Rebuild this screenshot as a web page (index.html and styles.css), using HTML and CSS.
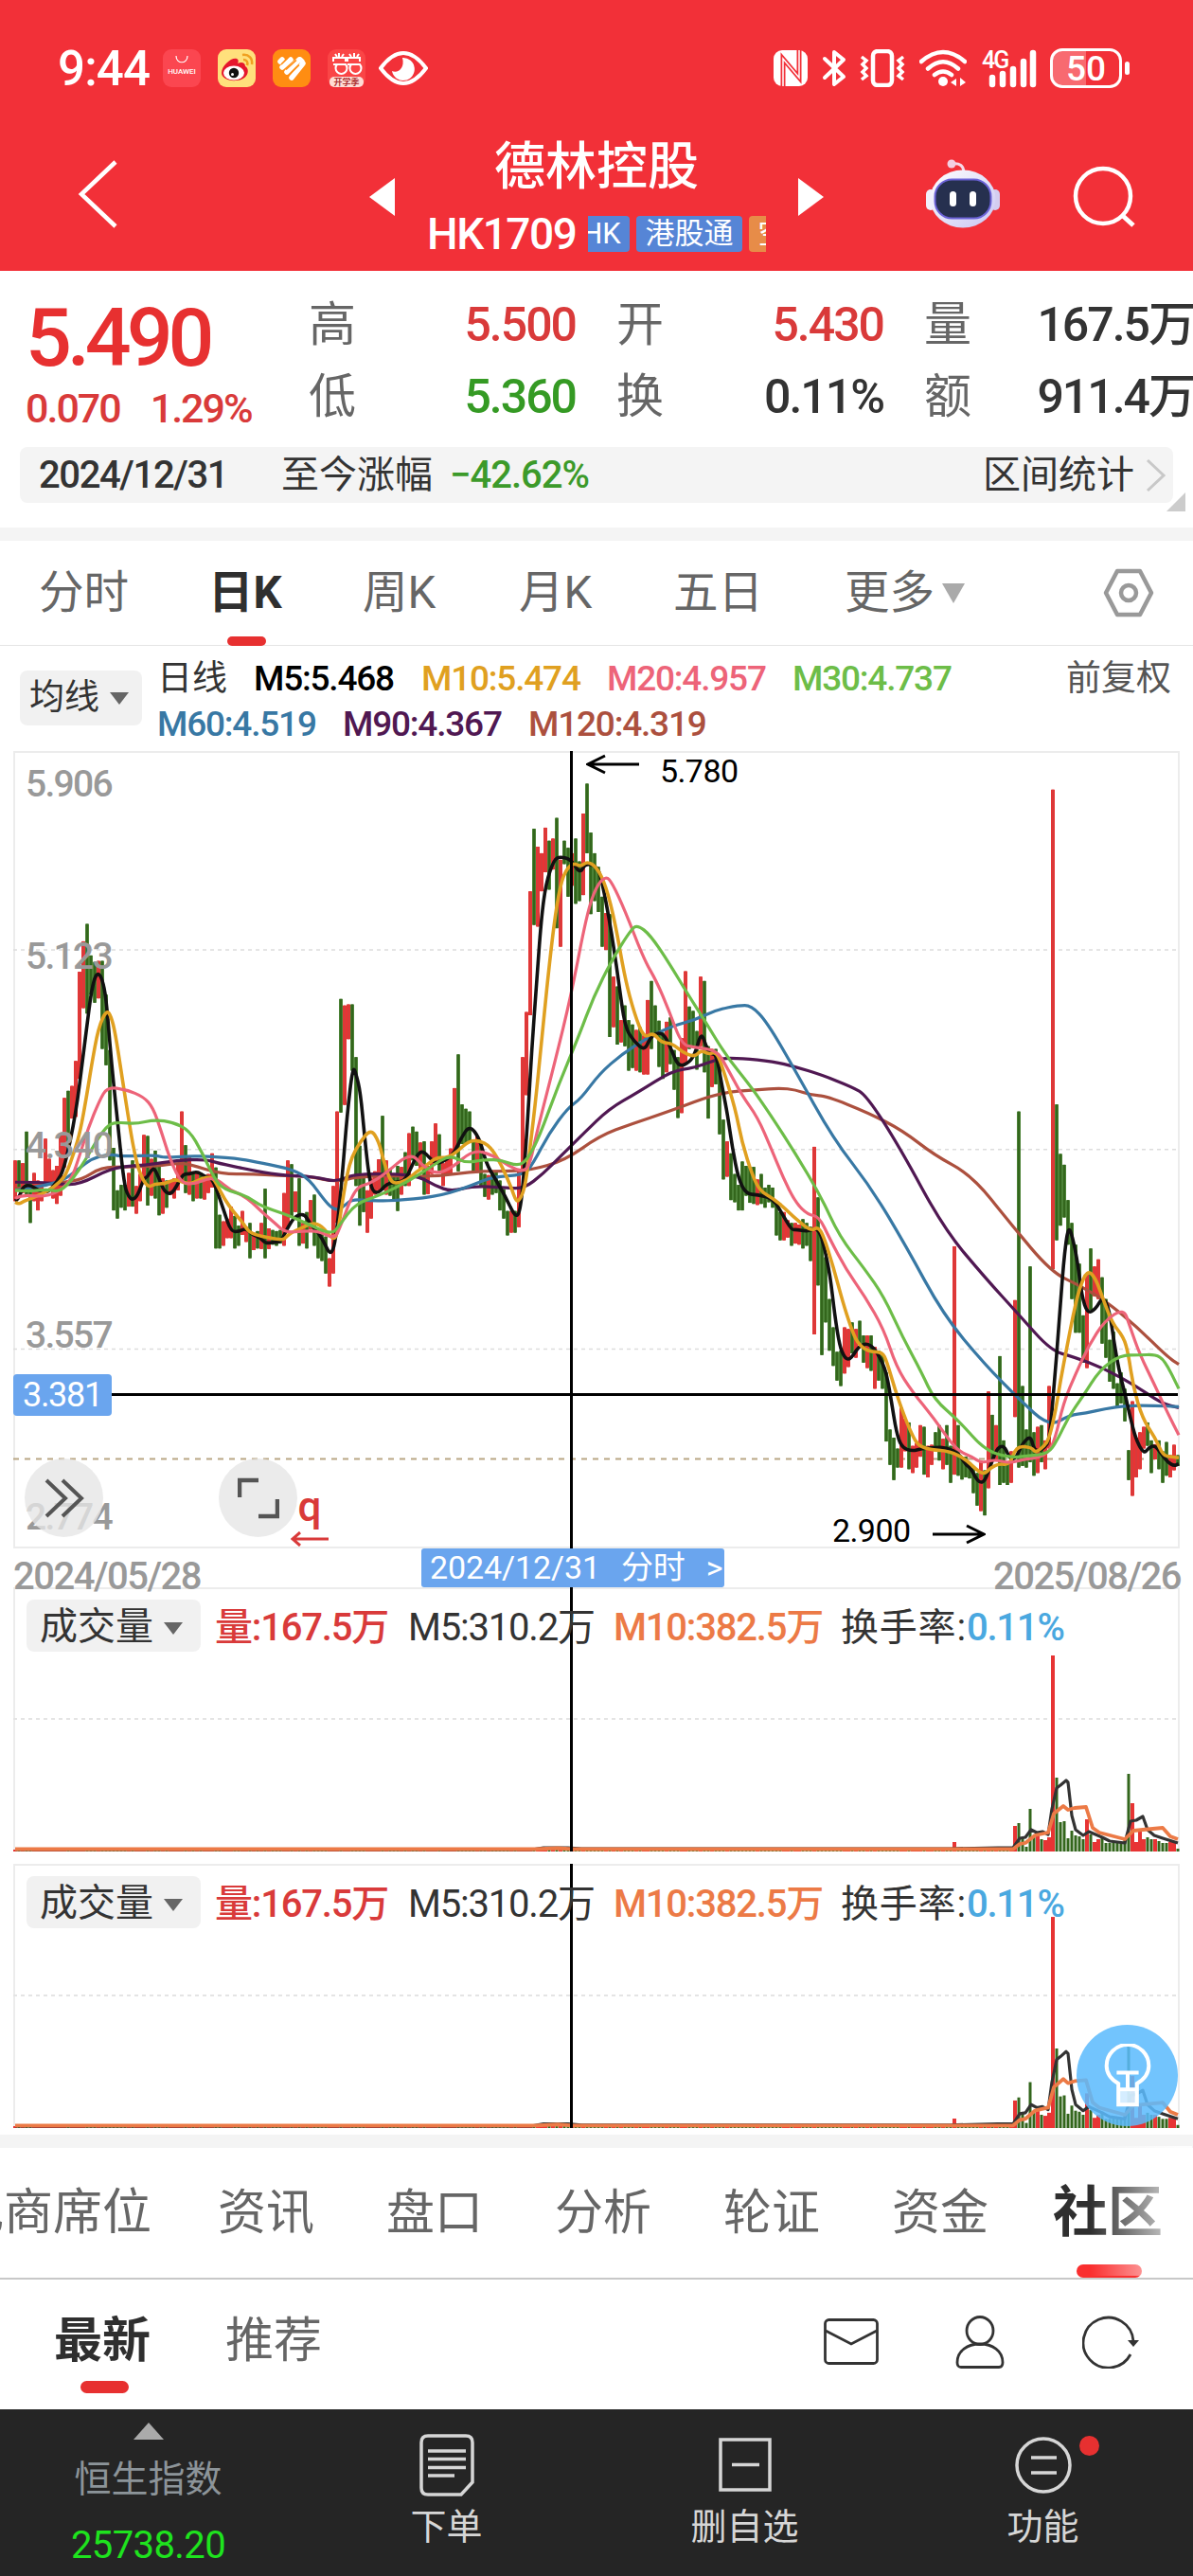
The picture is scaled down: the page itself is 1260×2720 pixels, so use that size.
FILE: index.html
```html
<!DOCTYPE html>
<html lang="zh-CN">
<head>
    <meta charset="UTF-8">
    <meta name="viewport" content="width=device-width, initial-scale=1.0">
    <title>德林控股 HK1709</title>
    <link rel="stylesheet" href="styles.css">
</head>
<body>
    <!-- Red Header -->
    <div class="header">
        <div class="status-bar">
            <span class="clock">9:44</span>
            <svg class="app-icon" viewBox="0 0 40 40"><rect width="40" height="40" rx="9" fill="#fb4650"/><path d="M14 7c0 9 12 9 12 0" fill="none" stroke="#fff" stroke-width="1.2"/><text x="20" y="25.500" text-anchor="middle" class="huawei">HUAWEI</text></svg>
            <svg class="app-icon" viewBox="0 0 40 40"><rect width="40" height="40" rx="9" fill="#ffe07c"/><path d="M4 25C4 17 15 8 20 10c3 1 1 5 1 5 4-2 8-1 8 3 5 2 4 14-9 15-9 1-16-3-16-8z" fill="#e6162d"/><ellipse cx="17" cy="25" rx="11" ry="7.500" fill="#fff"/><circle cx="17" cy="25" r="5.200" fill="#111"/><circle cx="15.500" cy="26.500" r="1.500" fill="#fff"/><path d="M26 6c7-1 11 4 10 10M27 11c4 0 5 3 4 6" fill="none" stroke="#f0a020" stroke-width="2.500"/></svg>
            <svg class="app-icon" viewBox="0 0 40 40"><rect width="40" height="40" rx="9" fill="#ff8d12"/><g stroke="#fff" stroke-width="5.500" stroke-linecap="round"><path d="M8 13l2-2M10 19l9-8M15 24l13-13M20 30l12-15M29 11l2 2"/></g><path d="M9 16l7-7M14 21.500l11-10M18 26.500l10-10" stroke="#ff8d12" stroke-width="1.600"/></svg>
            <svg class="app-icon" viewBox="0 0 40 40"><rect width="40" height="40" rx="9" fill="#fa4546"/><g fill="none" stroke="#fff" stroke-width="2"><path d="M6 13V9h13v4M21 13V9h13v4M6 16h13a6 6 0 1 1-9 0M21 16h13a6 6 0 1 1-9 0M8 5l2 3M12 4v4M17 5l-2 3M23 5l2 3M28 4v4M33 5l-2 3"/></g><rect x="2" y="29" width="36" height="11" rx="5" fill="#ffdcd5"/><text x="20" y="38" text-anchor="middle" class="back-school">开学季</text></svg>
            <svg class="eye-icon" viewBox="0 0 52 38"><path d="M2 19Q26-13 50 19Q26 51 2 19z" fill="none" stroke="#fff" stroke-width="4"/><path d="M25 8a12 12 0 1 1-11 14c6 3 14-3 11-14z" fill="#fff"/></svg>
            <div class="status-right">
                <svg width="36" height="38" viewBox="0 0 36 38"><rect width="36" height="38" rx="9" fill="#fff"/><path d="M10 38V9l17 20V0" fill="none" stroke="#f23038" stroke-width="5"/><path d="M10 38V9l17 20V0" fill="none" stroke="#fff" stroke-width="1.500"/></svg>
                <svg class="bluetooth" width="26" height="40" viewBox="0 0 26 40"><path d="M3 10l20 19-10 8V3l10 8L3 30" fill="none" stroke="#fff" stroke-width="4" stroke-linejoin="round" stroke-linecap="round"/></svg>
                <svg class="vibrate" width="48" height="40" viewBox="0 0 48 40"><rect x="14" y="2" width="20" height="36" rx="5" fill="none" stroke="#fff" stroke-width="4.500"/><path d="M2 8l5 4-4 4 4 4-4 4 4 4-5 4M46 8l-5 4 4 4-4 4 4 4-4 4 5 4" fill="none" stroke="#fff" stroke-width="3.500"/></svg>
                <svg class="wifi" width="50" height="40" viewBox="0 0 50 40"><g fill="none" stroke="#fff" stroke-width="4.500" stroke-linecap="round"><path d="M2 13Q25-7 48 13M9 20.500Q25 6 41 20.500M16 27q9-7 18 0"/></g><circle cx="25" cy="34" r="5" fill="#fff"/><path d="M39 31v8l-6-4zM43 30v9l6-4z" fill="#fff"/></svg>
                <svg class="signal" width="58" height="40" viewBox="0 0 58 40"><text x="0" y="20" class="net">4G</text><path d="M11 37v-7M22 37V26M33 37V21M44 37V13M54 37V4" stroke="#fff" stroke-width="6.500" stroke-linecap="round"/></svg>
                <div class="battery">50</div><span class="battery-tip"></span>
            </div>
        </div>
        <div class="title-bar">
            <svg class="back" width="42" height="72" viewBox="0 0 42 72"><path d="M40 2L4 36l36 34" fill="none" stroke="#fff" stroke-width="4.500"/></svg>
            <svg class="prev" width="27" height="40" viewBox="0 0 27 40"><path d="M27 0v40L0 20z" fill="#fff"/></svg>
            <div class="stock">
                <div class="stock-name">德林控股</div>
                <div class="stock-code">
                    <span class="code">HK1709</span>
                    <div class="tags"><span class="tag tag-hk">HK</span><span class="tag">港股通</span><span class="tag tag-short">空</span></div>
                </div>
            </div>
            <svg class="next" width="27" height="40" viewBox="0 0 27 40"><path d="M0 0v40l27-20z" fill="#fff"/></svg>
            <svg class="robot" width="80" height="74" viewBox="0 0 80 74">
                <defs>
                    <linearGradient id="shell" x2="1" y2="1"><stop offset="0" stop-color="#fff"/><stop offset="1" stop-color="#c9c6f3"/></linearGradient>
                </defs>
                <path d="M28 5q13-2 13 10" fill="none" stroke="#f6d8e8" stroke-width="3"/><circle cx="28" cy="5" r="4.500" fill="#f3cfe2"/>
                <rect x="1" y="32" width="10" height="22" rx="5" fill="#f1effb"/><rect x="69" y="32" width="10" height="22" rx="5" fill="#d3cdf0"/>
                <ellipse cx="40" cy="42" rx="34.500" ry="30.500" fill="url(#shell)"/>
                <rect x="10.500" y="21.500" width="59" height="41" rx="18" fill="#26304f" stroke="#6c63d8" stroke-width="2"/>
                <rect x="26" y="34" width="7" height="16" rx="3.500" fill="#fff"/><rect x="47" y="34" width="7" height="16" rx="3.500" fill="#fff"/>
            </svg>
            <svg class="search" width="68" height="68" viewBox="0 0 68 68"><circle cx="32" cy="32" r="29" fill="none" stroke="#fff" stroke-width="4.500"/><path d="M53 53l11 10" stroke="#fff" stroke-width="5"/></svg>
        </div>
    </div>

    <!-- Quote Section -->
    <div class="quote">
        <div class="price-block">
            <div class="price">5.490</div>
            <div class="change"><span>0.070</span><span>1.29%</span></div>
        </div>
        <div class="quote-grid">
            <div class="cell"><span>高</span><b class="up">5.500</b></div>
            <div class="cell"><span>开</span><b class="up">5.430</b></div>
            <div class="cell"><span>量</span><b>167.5万</b></div>
            <div class="cell"><span>低</span><b class="down">5.360</b></div>
            <div class="cell"><span>换</span><b>0.11%</b></div>
            <div class="cell"><span>额</span><b>911.4万</b></div>
        </div>
    </div>
    <div class="range-bar">
        <span class="range-date">2024/12/31</span>
        <span class="range-label">至今涨幅</span>
        <span class="range-value">−42.62%</span>
        <span class="range-link">区间统计</span>
        <svg width="22" height="36" viewBox="0 0 22 36"><path d="M2 2l17 16L2 34" fill="none" stroke="#c8c8c8" stroke-width="3"/></svg>
        <i class="corner"></i>
    </div>
    <div class="divider"></div>

    <!-- Period Tabs -->
    <div class="period-tabs">
        <span>分时</span>
        <span class="active">日K</span>
        <span>周K</span>
        <span>月K</span>
        <span>五日</span>
        <span>更多<i class="caret"></i></span>
        <svg width="54" height="52" viewBox="0 0 54 52"><path d="M15 3h24l12 23-12 23H15L3 26z" fill="none" stroke="#999" stroke-width="4.500" stroke-linejoin="round"/><circle cx="27" cy="26" r="8" fill="none" stroke="#999" stroke-width="4.500"/></svg>
    </div>

    <!-- Moving Average Legend -->
    <div class="legend">
        <div class="select">均线<i class="caret"></i></div>
        <div class="legend-rows">
            <div class="legend-row">
                <span class="day">日线</span>
                <span class="m5">M5:5.468</span>
                <span class="m10">M10:5.474</span>
                <span class="m20">M20:4.957</span>
                <span class="m30">M30:4.737</span>
                <span class="adjust">前复权</span>
            </div>
            <div class="legend-row">
                <span class="m60">M60:4.519</span>
                <span class="m90">M90:4.367</span>
                <span class="m120">M120:4.319</span>
            </div>
        </div>
    </div>

    <!-- K Line Chart -->
    <div class="k-chart">
        <svg class="plot" id="kline" viewBox="42 22 3696 1465" preserveAspectRatio="none"></svg>
        <span class="axis axis-1">5.906</span>
        <span class="axis axis-2">5.123</span>
        <span class="axis axis-3">4.340</span>
        <span class="axis axis-4">3.557</span>
        <span class="axis axis-5">2.774</span>
        <div class="cross-x"></div>
        <div class="cross-y"></div>
        <span class="cross-price">3.381</span>
        <div class="mark mark-high"><svg width="56" height="22" viewBox="0 0 56 22"><path d="M56 11H2M20 2L2 11l18 9" fill="none" stroke="#000" stroke-width="3"/></svg><span>5.780</span></div>
        <div class="mark mark-low"><span>2.900</span><svg width="56" height="22" viewBox="0 0 56 22"><path d="M0 11h54M36 2l18 9-18 9" fill="none" stroke="#000" stroke-width="3"/></svg></div>
        <div class="round expand"><svg width="42" height="42" viewBox="0 0 42 42"><path d="M2 2l20 19L2 40M19 2l20 19-20 19" fill="none" stroke="#555" stroke-width="4"/></svg></div>
        <div class="round full"><svg width="44" height="44" viewBox="0 0 44 44"><path d="M2 21V3h20M42 23v18H22" fill="none" stroke="#555" stroke-width="4.500"/></svg></div>
        <div class="ex-right">q<svg width="40" height="16" viewBox="0 0 40 16"><path d="M40 8H2M10 1L2 8l8 7" fill="none" stroke="#d93a3a" stroke-width="3"/></svg></div>
    </div>
    <div class="dates">
        <span>2024/05/28</span>
        <span class="date-pill"><span>2024/12/31</span><span>分时</span><span>&gt;</span></span>
        <span class="date-end">2025/08/26</span>
    </div>

    <!-- Volume Charts -->
    <div class="volume">
        <svg class="plot" data-scale="1" data-mid="139" viewBox="0 0 1232 279"></svg>
        <div class="cross-y"></div>
        <div class="volume-head">
            <div class="select">成交量<i class="caret"></i></div>
            <span class="vol">量:167.5万</span><span class="v5">M5:310.2万</span><span class="v10">M10:382.5万</span><span class="rate">换手率:<em>0.11%</em></span>
        </div>
    </div>
    <div class="volume second">
        <svg class="plot" data-scale="1.077" data-mid="139" viewBox="0 0 1232 279"></svg>
        <div class="cross-y"></div>
        <div class="volume-head">
            <div class="select">成交量<i class="caret"></i></div>
            <span class="vol">量:167.5万</span><span class="v5">M5:310.2万</span><span class="v10">M10:382.5万</span><span class="rate">换手率:<em>0.11%</em></span>
        </div>
        <div class="tips">
            <svg width="50" height="68" viewBox="0 0 56 76"><g fill="none" stroke="#fff" stroke-width="4.500"><path d="M17 54v-7C5 40 3 31 3 26a25 25 0 0 1 50 0c0 5-2 14-14 21v7zM17 54v18h22V54M15 34h26M28 34v22"/></g><rect x="17" y="56" width="22" height="16" fill="#fff" opacity=".7"/></svg>
        </div>
    </div>
    <div class="divider"></div>

    <!-- Content Tabs -->
    <div class="content-tabs">
        <span class="seat">经纪商席位</span>
        <span>资讯</span>
        <span>盘口</span>
        <span>分析</span>
        <span>轮证</span>
        <span>资金</span>
        <span class="active">社区</span>
    </div>
    <div class="sub-tabs">
        <span class="active">最新</span>
        <span>推荐</span>
        <svg class="mail" width="58" height="50" viewBox="0 0 58 50"><rect x="1.500" y="1.500" width="55" height="46" rx="4" fill="none" stroke="#333" stroke-width="2.800"/><path d="M2 13l27 14 27-14" fill="none" stroke="#333" stroke-width="2.800"/></svg>
        <svg class="user" width="52" height="56" viewBox="0 0 52 56"><ellipse cx="26" cy="16" rx="14" ry="14.500" fill="none" stroke="#333" stroke-width="2.800"/><path d="M6 54.500q-4 0-4-5C2 37 13 30 26 30s24 7 24 19.500q0 5-4 5z" fill="none" stroke="#333" stroke-width="2.800"/></svg>
        <svg class="refresh" width="60" height="56" viewBox="0 0 60 56"><path d="M51 41A26.500 26.500 0 1 1 54 27" fill="none" stroke="#333" stroke-width="2.800"/><path d="M48 26h12l-6 7z" fill="#333"/></svg>
    </div>

    <!-- Bottom Bar -->
    <div class="bottom-bar">
        <div class="index">
            <i></i>
            <span class="index-name">恒生指数</span>
            <span class="index-value">25738.20</span>
        </div>
        <div class="action">
            <svg width="60" height="66" viewBox="0 0 60 66"><path d="M10 2h40q7 0 7 7v42L45 64H10q-7 0-7-7V9q0-7 7-7z" fill="none" stroke="#d6d6d6" stroke-width="3.500"/><path d="M10 18h40M10 26.500h40M10 35.500h40M10 44h28" stroke="#d6d6d6" stroke-width="3.500"/></svg>
            <span>下单</span>
        </div>
        <div class="action">
            <svg width="60" height="66" viewBox="0 0 60 66"><path d="M4 6h52v53H4zM16 32.500h29" fill="none" stroke="#d6d6d6" stroke-width="3.500"/></svg>
            <span>删自选</span>
        </div>
        <div class="action">
            <svg width="60" height="66" viewBox="0 0 60 66"><circle cx="30" cy="33" r="28" fill="none" stroke="#d6d6d6" stroke-width="3.500"/><path d="M17 25h27M17 41h27" stroke="#d6d6d6" stroke-width="3.500"/></svg>
            <span>功能</span>
            <i class="dot"></i>
        </div>
    </div>
    <script src="chart.js"></script>
</body>
</html>
```
FILE: styles.css
```css
* {
    box-sizing: border-box;
}
body {
    margin: 0;
    width: 1260px;
    height: 2720px;
    overflow: hidden;
    background: #fff;
    color: #333;
    font-family: Roboto, "Noto Sans CJK SC", sans-serif;
    white-space: nowrap;
}
svg {
    display: block;
    flex: none;
}
i, em {
    font-style: normal;
}

/* Header */
.header {
    height: 286px;
    background: #f23038;
    color: #fff;
}
.status-bar {
    display: flex;
    align-items: center;
    height: 144px;
    padding: 0 67px 0 61px;
}
.clock {
    width: 111px;
    font-size: 51px;
    font-weight: 500;
    letter-spacing: -.8px;
}
.app-icon {
    width: 40px;
    height: 40px;
    margin-right: 18px;
}
.huawei {
    font-size: 8px;
    font-weight: 500;
    fill: #fff;
}
.back-school {
    font-size: 9px;
    font-weight: 700;
    fill: #a33;
}
.eye-icon {
    width: 52px;
    height: 38px;
    margin-left: -4px;
}
.status-right {
    display: flex;
    align-items: center;
    margin-left: auto;
}
.bluetooth {
    margin-left: 15px;
}
.vibrate {
    margin-left: 14px;
}
.wifi {
    margin-left: 15px;
}
.signal {
    margin-left: 16px;
    overflow: visible;
}
.net {
    font-size: 25px;
    font-weight: 500;
    letter-spacing: -2px;
    fill: #fff;
}
.battery {
    width: 76px;
    height: 42px;
    margin-left: 14px;
    border: 3px solid #fff;
    border-radius: 13px;
    background: linear-gradient(90deg, #f86a70 50%, #f23038 50%);
    font-size: 37px;
    font-weight: 500;
    line-height: 37px;
    text-align: center;
}
.battery-tip {
    width: 5px;
    height: 14px;
    margin-left: 3px;
    border-radius: 3px;
    background: #fff;
}
.title-bar {
    display: flex;
    align-items: flex-start;
    height: 142px;
    padding-left: 82px;
}
.back {
    margin-top: 25px;
}
.prev {
    margin: 44px 0 0 266px;
}
.stock {
    width: 426px;
    padding-left: 34px;
}
.stock-name {
    width: 358px;
    height: 64px;
    font-size: 54px;
    font-weight: 500;
    line-height: 66px;
    text-align: center;
}
.stock-code {
    display: flex;
    align-items: flex-start;
    height: 78px;
    margin-top: -1px;
    padding-top: 20px;
}
.code {
    width: 170px;
    font-size: 46px;
    font-weight: 500;
    line-height: 40px;
    letter-spacing: -1.5px;
}
.tags {
    display: flex;
    gap: 7px;
    width: 188px;
    height: 38px;
    margin-top: 1px;
    overflow: hidden;
}
.tag {
    flex: none;
    width: 112px;
    height: 38px;
    border-radius: 4px;
    background: #5685d6;
    font-size: 31px;
    line-height: 38px;
    text-align: center;
}
.tag-hk {
    width: 60px;
    margin-left: -16px;
}
.tag-short {
    width: 50px;
    background: #e78c48;
}
.next {
    margin-top: 44px;
}
.robot {
    margin: 24px 0 0 107px;
}
.search {
    margin: 31px 0 0 76px;
}

/* Quote */
.quote {
    display: flex;
    height: 186px;
}
.price-block {
    width: 326px;
    padding: 20px 0 0 27px;
}
.price {
    height: 96px;
    color: #e73030;
    font-size: 86px;
    font-weight: 500;
    line-height: 101px;
    letter-spacing: -5px;
}
.change {
    display: flex;
    gap: 32px;
    margin-top: 2px;
    color: #d93a3a;
    font-size: 43px;
    font-weight: 500;
    line-height: 55px;
    letter-spacing: -2px;
}
.quote-grid {
    display: grid;
    grid-template-columns: 281px 281px 284px;
    grid-auto-rows: 76px;
    column-gap: 44px;
    padding-top: 19px;
}
.cell {
    display: flex;
    justify-content: space-between;
    color: #666;
    font-size: 50px;
    line-height: 76px;
}
.cell b {
    margin-right: -1px;
    color: #333;
    font-weight: 500;
    letter-spacing: -2px;
}
.cell .up {
    color: #d93a3a;
}
.cell .down {
    color: #359a24;
}
.range-bar {
    position: relative;
    display: flex;
    align-items: center;
    height: 59px;
    margin: 0 21px 26px;
    padding: 0 7px 0 20px;
    border-radius: 8px;
    background: #f4f4f4;
    font-size: 40px;
    line-height: 59px;
}
.range-date {
    width: 256px;
    font-weight: 500;
    letter-spacing: -1.4px;
}
.range-label {
    width: 178px;
}
.range-value {
    color: #3c9a2a;
    font-weight: 500;
    letter-spacing: -1px;
}
.range-link {
    margin-left: auto;
    margin-right: 12px;
}
.corner {
    position: absolute;
    right: -13px;
    bottom: -9px;
    border: 10px solid;
    border-color: transparent #ccc #ccc transparent;
}
.divider {
    height: 14px;
    background: #f4f4f4;
}

/* Period tabs */
.period-tabs {
    display: flex;
    align-items: center;
    height: 111px;
    padding-left: 41px;
    border-bottom: 1px solid #e5e5e5;
    color: #666;
    font-size: 47.5px;
}
.period-tabs span {
    width: 163px;
    line-height: 112px;
}
.period-tabs span:first-child {
    width: 179px;
}
.period-tabs span:nth-child(3) {
    width: 165px;
}
.period-tabs span:nth-child(5) {
    width: 181px;
}
.period-tabs span:nth-child(6) {
    width: 273px;
}
.period-tabs .active {
    position: relative;
    color: #2f2f2f;
    font-weight: 700;
}
.period-tabs .active::after {
    content: "";
    position: absolute;
    left: 20px;
    bottom: 0;
    width: 41px;
    height: 10px;
    border-radius: 5px;
    background: #e73030;
}
.caret {
    display: inline-block;
    border: 10px solid transparent;
    border-top: 13px solid #666;
    border-bottom: 0;
}
.period-tabs .caret {
    margin: 0 0 5px 8px;
    border-width: 21px 12px 0;
    border-top-color: #aaa;
}

/* Legend */
.legend {
    display: flex;
    height: 111px;
    padding: 11px 23px 0 21px;
    font-size: 37px;
}
.select {
    height: 58px;
    border-radius: 8px;
    background: #f1f1f1;
    line-height: 58px;
}
.select .caret {
    margin: 0 0 5px 11px;
}
.legend .select {
    width: 129px;
    margin-top: 15px;
    padding-left: 10px;
}
.legend-rows {
    flex: 1;
    padding-left: 16px;
}
.legend-row {
    display: flex;
    font-weight: 500;
    line-height: 48px;
    letter-spacing: -1.2px;
}
.legend-row span {
    width: 196px;
}
.legend-row .day {
    width: 102px;
    font-weight: 400;
    letter-spacing: 0;
}
.legend-row .m5 {
    width: 177px;
    color: #000;
}
.legend-row .m60, .legend-row .m90 {
    width: 196px;
}
.legend-row .adjust {
    width: auto;
    margin-left: auto;
    font-weight: 400;
    letter-spacing: 0;
    color: #555;
}
.m10 { color: #e0a020; }
.m20 { color: #ed6479; }
.m30 { color: #6dbd48; }
.m60 { color: #3878a4; }
.m90 { color: #501852; }
.m120 { color: #ac503e; }

/* Charts */
.k-chart {
    position: relative;
    height: 842px;
    margin: 0 14px;
    border: 2px solid #ececec;
}
.plot {
    position: absolute;
    left: -2px;
    top: -2px;
    width: 1232px;
    height: 841px;
    overflow: visible;
}
.grid-line {
    stroke: #ddd;
    stroke-width: 1.5;
    stroke-dasharray: 4 4;
}
.now-line {
    stroke: #b9a684;
    stroke-width: 2;
    stroke-dasharray: 6 6;
}
.bar-up { fill: #e73434; }
.bar-down { fill: #4c8237; }
.core-up { fill: #d93a3a; }
.core-down { fill: #33661c; }
.line {
    fill: none;
    stroke-width: 3.2;
    stroke-linejoin: round;
    vector-effect: non-scaling-stroke;
}
.line-m5 { stroke: #111; stroke-width: 3.6; }
.line-m10 { stroke: #e0a020; stroke-width: 3.6; }
.line-m20 { stroke: #ed6479; }
.line-m30 { stroke: #6dbd48; }
.line-m60 { stroke: #3878a4; }
.line-m90 { stroke: #501852; }
.line-m120 { stroke: #ac503e; }
.line-v5 { stroke: #333; }
.line-v10 { stroke: #ec7a46; stroke-width: 3.8; }
.axis {
    position: absolute;
    left: 11px;
    color: #999;
    font-size: 39px;
    font-weight: 500;
    line-height: 40px;
    letter-spacing: -1.7px;
}
.axis-1 { top: 13px; }
.axis-2 { top: 195px; }
.axis-3 { top: 395px; }
.axis-4 { top: 595px; }
.axis-5 { top: 787px; }
.cross-x {
    position: absolute;
    left: 0;
    right: 0;
    top: 676px;
    height: 3px;
    background: #000;
}
.cross-y {
    position: absolute;
    left: 586px;
    top: -2px;
    bottom: -2px;
    width: 3px;
    background: #000;
}
.cross-price {
    position: absolute;
    left: -2px;
    top: 656px;
    width: 104px;
    height: 44px;
    padding-left: 10px;
    border-radius: 4px;
    background: #6aa5ee;
    color: #fff;
    font-size: 36px;
    line-height: 44px;
    letter-spacing: -1.3px;
}
.mark {
    position: absolute;
    display: flex;
    color: #000;
    font-size: 34px;
    line-height: 36px;
    letter-spacing: -.6px;
}
.mark-high {
    left: 603px;
    top: 1px;
    gap: 22px;
}
.mark-low {
    left: 863px;
    top: 803px;
    gap: 24px;
}
.mark-low svg {
    margin-top: 11px;
}
.round {
    position: absolute;
    top: 745px;
    display: flex;
    align-items: center;
    justify-content: center;
    width: 83px;
    height: 83px;
    border-radius: 50%;
    background: rgba(230, 230, 230, .78);
}
.expand { left: 10px; }
.full { left: 215px; }
.ex-right {
    position: absolute;
    left: 291px;
    top: 773px;
    width: 40px;
    color: #d93a3a;
    font-size: 44px;
    font-weight: 500;
    line-height: 46px;
    text-align: center;
}
.ex-right svg {
    margin-top: 3px;
}
.dates {
    position: relative;
    z-index: 1;
    display: flex;
    height: 41px;
    padding: 0 14px;
    color: #999;
    font-size: 40px;
    font-weight: 500;
    line-height: 59px;
    letter-spacing: -1.5px;
}
.date-end {
    margin-left: auto;
    margin-right: -1px;
}
.dates > span:first-child {
    width: 431px;
}
.date-pill {
    display: flex;
    gap: 22px;
    width: 320px;
    height: 41px;
    padding-left: 9px;
    border-radius: 3px;
    background: #6aa5ee;
    color: #fff;
    font-size: 34px;
    font-weight: 400;
    line-height: 41px;
    letter-spacing: -.1px;
}
.volume {
    position: relative;
    height: 279px;
    margin: 0 14px;
    border: 2px solid #ececec;
    border-bottom: 0;
}
.volume .plot {
    height: 279px;
}
.volume .cross-y {
    bottom: 0;
}
.second {
    margin-top: 13px;
    margin-bottom: 7px;
}
.volume-head {
    position: relative;
    display: flex;
    padding: 11px 0 0 12px;
    font-size: 40px;
    line-height: 60px;
    letter-spacing: -1.2px;
}
.volume-head .select {
    width: 184px;
    height: 55px;
    padding-left: 14px;
    line-height: 57px;
    letter-spacing: 0;
}
.vol {
    width: 204px;
    margin-left: 15px;
    color: #d93a3a;
    font-weight: 500;
}
.v5 {
    width: 217px;
}
.v10 {
    width: 240px;
    color: #ec7a46;
    font-weight: 500;
}
.rate {
    letter-spacing: .8px;
}
.volume-head em {
    color: #4aa8e0;
    font-weight: 500;
    letter-spacing: -1.2px;
}
.volume .grid-line {
    stroke: #e4e4e4;
    stroke-width: 2;
}
.tips {
    position: absolute;
    right: 0;
    top: 168px;
    display: flex;
    align-items: center;
    justify-content: center;
    width: 107px;
    height: 107px;
    border-radius: 50%;
    background: rgba(91, 186, 253, .86);
}

/* Content tabs */
.content-tabs {
    display: flex;
    align-items: center;
    height: 139px;
    border-bottom: 2px solid #c8c8c8;
    color: #666;
    font-size: 51px;
    line-height: 141px;
}
.content-tabs span {
    flex: none;
    width: 178px;
}
.content-tabs .seat {
    display: flex;
    justify-content: flex-end;
    width: 160px;
    margin-right: 70px;
    font-size: 52px;
}
.content-tabs .active {
    position: relative;
    width: 117px;
    margin-left: -8px;
    color: #2f2f2f;
    font-size: 58px;
    font-weight: 700;
}
/* fade towards the right edge */
.content-tabs .active::before {
    content: "";
    position: absolute;
    z-index: 1;
    left: 40px;
    top: 0;
    width: 107px;
    height: 137px;
    background: linear-gradient(90deg, rgba(255, 255, 255, 0), rgba(255, 255, 255, .85) 90%);
}
.content-tabs .active::after {
    content: "";
    position: absolute;
    left: 25px;
    bottom: 2px;
    width: 69px;
    height: 14px;
    border-radius: 7px;
    background: #fa2f2f;
}
.sub-tabs {
    display: flex;
    align-items: center;
    height: 137px;
    padding: 0 57px;
    color: #666;
    font-size: 51px;
    line-height: 129px;
}
.sub-tabs span {
    width: 181px;
    height: 137px;
}
.sub-tabs .active {
    position: relative;
    color: #2f2f2f;
    font-weight: 700;
}
.sub-tabs .active::after {
    content: "";
    position: absolute;
    left: 28px;
    bottom: 17px;
    width: 51px;
    height: 13px;
    border-radius: 7px;
    background: #e73030;
}
.mail {
    margin-left: auto;
}
.sub-tabs svg {
    margin-bottom: 6px;
}
.user {
    margin-left: 81px;
}
.refresh {
    margin-left: 82px;
}

/* Bottom bar */
.bottom-bar {
    display: grid;
    grid-template-columns: repeat(4, 315px);
    height: 176px;
    background: #252525;
    color: #d6d6d6;
    font-size: 38px;
}
.index, .action {
    position: relative;
    display: flex;
    flex-direction: column;
    align-items: center;
    padding-right: 2px;
}
.index i {
    margin-top: 14px;
    border: 16px solid transparent;
    border-top: 0;
    border-bottom: 18px solid #aaa;
}
.index-name {
    margin-top: 17px;
    color: #8c9499;
    font-size: 39px;
    line-height: 50px;
}
.index-value {
    margin-top: 21px;
    color: #1ee31e;
    font-size: 40px;
    line-height: 48px;
    letter-spacing: -.6px;
}
.action svg {
    margin-top: 26px;
}
.action span {
    margin-top: 7px;
    line-height: 50px;
}
.dot {
    position: absolute;
    left: 195px;
    top: 28px;
    width: 21px;
    height: 21px;
    border-radius: 50%;
    background: #e73030;
}
```
FILE: chart.js
```javascript
const SVG = 'http://www.w3.org/2000/svg';

// daily bars: direction, top, bottom
const bars = `r775-850 g775-830 r780-835 g722-838 g815-890 r798-850 r812-867 r815-850 r735-820 r772-820 r793-845 r785-855
r728-840 r660-788 g647-760 r638-698 r592-695 r428-625 r372-495 g340-505 g398-470 g410-485 r408-477 g408-570
g470-600 g572-775 g752-867 g830-882 g820-862 g820-867 r798-860 g775-860 r822-873 r800-850 r728-815 g730-858
r772-840 g757-845 g782-876 r808-873 g812-862 r812-838 r808-845 r780-830 r685-815 g747-835 r767-838 g797-850
r795-845 g798-845 r806-847 r800-835 r762-825 g788-937 g875-937 r887-932 r882-918 r860-918 g877-937 g895-932
r868-912 r897-925 g890-955 r908-940 g905-937 r890-938 g827-955 r900-938 g903-930 g905-932 g903-928 r835-932
r775-900 g782-880 r832-870 g808-932 r890-928 g870-937 r848-902 g838-932 g905-955 g905-960 g915-983 r955-1007
r822-983 r685-890 g478-687 r490-673 r488-552 g488-610 g585-822 g748-895 g800-870 r830-908 r808-882 r795-838
r773-830 g693-830 r775-838 g790-840 g800-850 g785-868 r787-838 g760-822 r725-822 g713-775 g722-785 r742-790
g740-838 r785-837 r740-800 r707-780 g727-795 r780-822 r770-800 r753-800 r642-762 g580-795 g672-745 g680-745
g685-740 g740-798 r730-795 g740-822 g800-842 r802-847 g795-838 g797-835 g812-867 g828-882 g868-913 r868-908
g868-908 r790-898 r585-800 r502-655 r280-508 g165-342 r198-345 r210-280 r163-245 g187-277 r183-240 g145-348
r222-382 g187-230 g200-290 r210-270 g183-303 g225-298 r137-287 g82-210 g172-322 g210-298 g235-318 g290-382
r320-388 g322-548 r437-530 g455-562 r517-558 g490-565 g517-610 g525-605 r535-610 g530-613 r545-617 r480-617
g445-570 g490-545 g518-603 g540-625 r520-613 g512-598 g572-645 g585-697 r550-688 r427-598 g492-570 g500-565
g537-608 r437-565 g445-613 g565-698 r570-640 g570-635 g585-727 g700-810 r740-805 g762-848 g800-852 g820-867
g777-867 g785-840 g787-853 g787-855 r810-857 g800-855 g825-862 g820-852 g825-862 g850-913 g870-922 r870-922
r885-917 g890-932 r890-928 r893-930 g883-937 g890-932 g897-960 r750-1095 g843-1005 g920-1133 g953-1073 g1030-1125
g1082-1153 g1127-1180 g1125-1190 r1082-1167 r1085-1155 g1073-1130 r1085-1138 g1070-1112 g1097-1147 r1097-1157 g1097-1162 r1118-1195
g1125-1180 g1130-1195 g1165-1292 g1270-1335 g1285-1363 g1305-1340 r1230-1340 r1250-1310 g1257-1343 r1300-1350 r1295-1340 r1262-1320
g1265-1353 r1300-1358 r1298-1335 g1275-1310 g1262-1327 r1287-1343 g1262-1335 g1300-1368 r933-1353 g1262-1355 g1320-1362 g1320-1358
g1330-1360 g1340-1387 g1350-1410 r1330-1420 g1345-1428 r1200-1378 g1243-1325 r1262-1325 g1135-1372 g1290-1368 g1330-1372 r1310-1368
r1032-1247 g685-1340 g1190-1337 g1270-1340 g970-1330 g1275-1355 r1265-1350 g1262-1330 r1290-1343 r1190-1305 r93-975 g672-922
g763-895 g783-880 g848-930 g890-1030 g930-1092 g965-1092 g1060-1147 r985-1157 g937-1050 r970-1025 r957-1030 g990-1112
g1030-1138 g1105-1182 g1090-1195 g1185-1230 g1165-1222 g1195-1255 g1308-1363 r1218-1392 r1285-1358 r1275-1343 r1265-1305 g1257-1300
g1290-1350 r1297-1325 g1290-1343 g1310-1368 g1293-1355 r1317-1358 r1298-1345 g1317-1337`.split(/\s+/);

const averages = {
    m120: '48,827 120,822 200,815 260,810 320,788 400,787 500,785 560,780 600,782 700,800 800,800 880,803 980,804 1065,815 1130,805 1260,803 1380,805 1500,795 1600,795 1680,793 1790,775 1900,730 2000,708 2120,685 2280,650 2400,645 2470,642 2520,645 2570,655 2620,657 2750,687 2860,720 2960,765 3080,803 3200,890 3330,980 3420,1005 3500,1032 3600,1080 3700,1137 3735,1150',
    m90: '48,815 130,815 180,818 250,820 350,790 420,785 470,783 560,775 650,773 690,780 790,792 880,802 1000,805 1065,815 1120,800 1260,800 1330,805 1380,822 1430,832 1500,822 1600,825 1660,827 1720,800 1780,765 1850,725 1930,680 2020,650 2130,610 2200,605 2280,587 2350,587 2450,593 2520,603 2600,617 2700,640 2745,655 2850,750 2990,900 3120,990 3230,1060 3330,1125 3400,1136 3500,1158 3600,1190 3680,1222 3735,1230',
    m60: '48,830 130,823 200,812 250,790 290,772 345,763 390,768 490,765 520,770 600,767 670,768 760,772 830,780 930,792 980,810 1030,850 1060,867 1085,862 1115,846 1180,850 1280,848 1400,840 1500,820 1560,805 1660,802 1690,780 1740,725 1800,678 1840,662 1900,615 1970,580 2050,550 2130,528 2200,517 2270,498 2340,490 2380,490 2430,520 2520,610 2640,735 2760,825 2870,932 2990,1060 3120,1150 3230,1215 3325,1265 3390,1243 3440,1240 3500,1232 3570,1226 3660,1226 3735,1228',
    m5: '48,850 60,845 72,823 96,820 120,830 150,835 180,815 204,790 240,690 264,580 276,525 288,470 300,438 312,430 324,442 336,475 348,560 360,635 372,700 384,770 396,825 408,842 420,848 436,840 456,808 468,805 480,792 490,790 505,810 520,832 542,838 560,822 580,800 600,800 625,795 650,805 670,808 684,825 708,865 732,907 760,905 780,900 800,912 825,917 842,928 870,925 890,925 910,900 935,877 965,873 980,890 1010,908 1030,930 1045,947 1058,938 1070,890 1085,800 1100,690 1118,602 1128,615 1142,650 1155,730 1168,800 1180,832 1200,835 1225,818 1260,815 1285,812 1320,765 1340,757 1360,770 1385,782 1420,772 1440,760 1460,735 1488,710 1520,735 1540,780 1570,810 1600,840 1633,880 1648,870 1660,800 1672,700 1685,570 1700,450 1715,330 1730,265 1755,222 1775,216 1810,222 1838,248 1855,228 1895,235 1910,270 1930,330 1945,385 1960,445 1980,530 2010,557 2042,573 2060,550 2080,540 2105,543 2130,575 2150,603 2185,595 2205,575 2222,538 2240,570 2255,580 2270,580 2290,645 2305,690 2320,750 2340,810 2365,837 2400,838 2450,845 2480,875 2508,903 2522,902 2560,906 2592,898 2610,930 2630,985 2645,1060 2660,1115 2675,1137 2690,1142 2705,1132 2720,1118 2745,1111 2770,1120 2795,1145 2810,1170 2825,1220 2840,1275 2857,1303 2890,1310 2920,1305 2960,1303 3000,1303 3040,1315 3060,1335 3075,1340 3090,1358 3105,1368 3120,1365 3135,1342 3155,1310 3170,1300 3185,1303 3200,1325 3220,1322 3235,1300 3265,1280 3275,1305 3290,1310 3310,1303 3325,1290 3340,1190 3355,1080 3370,960 3385,893 3400,920 3415,965 3428,1025 3445,1056 3470,1050 3495,1025 3515,1050 3530,1110 3545,1160 3565,1205 3580,1245 3600,1290 3625,1315 3640,1303 3660,1299 3680,1315 3700,1330 3720,1337 3735,1333',
    m10: '48,852 60,856 75,850 100,845 150,832 190,815 210,800 235,760 255,720 275,655 290,600 312,530 338,498 352,510 365,540 385,615 405,690 425,760 445,803 470,825 490,818 520,818 545,812 560,810 600,820 640,808 672,805 690,822 710,845 740,870 770,890 790,908 830,915 880,920 900,921 915,910 960,898 990,890 1020,895 1055,922 1070,910 1085,850 1100,800 1115,768 1140,742 1175,717 1200,740 1215,775 1235,810 1250,818 1290,812 1320,795 1345,787 1380,770 1420,770 1450,758 1488,738 1530,740 1560,755 1590,785 1620,825 1636,852 1650,845 1665,820 1680,750 1700,650 1720,530 1745,390 1765,300 1785,248 1815,227 1840,235 1860,225 1890,235 1920,270 1950,340 1980,440 2010,505 2040,550 2070,540 2095,558 2130,560 2160,575 2200,585 2222,572 2245,580 2270,575 2290,605 2330,680 2350,740 2385,805 2410,832 2450,845 2490,865 2520,882 2570,905 2592,897 2610,915 2640,970 2670,1035 2695,1080 2715,1110 2750,1127 2795,1127 2810,1145 2835,1195 2865,1245 2890,1280 2910,1300 2950,1307 3010,1310 3060,1325 3090,1342 3117,1353 3140,1340 3165,1333 3200,1335 3220,1300 3270,1303 3280,1313 3310,1300 3325,1285 3345,1235 3360,1180 3380,1120 3400,1060 3420,1010 3445,977 3470,990 3495,1030 3525,1075 3560,1100 3575,1130 3590,1190 3620,1250 3660,1285 3685,1318 3710,1320 3735,1322',
    m20: '48,845 70,838 130,842 180,835 225,812 250,770 280,715 315,665 340,640 400,645 455,658 485,678 510,720 540,775 575,818 620,818 660,808 690,810 730,830 780,842 830,870 870,890 905,908 960,905 1010,905 1060,920 1080,895 1125,825 1170,818 1220,800 1300,760 1340,785 1380,800 1430,790 1500,755 1560,765 1610,785 1660,797 1680,780 1700,725 1760,590 1810,470 1860,320 1890,270 1920,252 1940,265 1980,315 2040,405 2080,445 2120,500 2160,562 2200,567 2270,572 2300,600 2350,655 2400,695 2445,755 2480,805 2520,852 2560,875 2595,878 2630,920 2680,975 2740,1025 2800,1085 2840,1155 2890,1200 2960,1250 3030,1308 3080,1320 3110,1332 3150,1325 3200,1332 3240,1325 3310,1320 3340,1295 3370,1220 3410,1165 3450,1115 3500,1070 3560,1047 3580,1080 3610,1130 3660,1190 3700,1240 3735,1280',
    m30: '48,830 90,832 150,828 190,833 230,810 270,775 310,735 345,708 380,705 430,708 490,700 550,705 600,720 640,760 680,810 710,828 780,840 830,860 900,873 960,888 1050,912 1075,895 1125,855 1200,840 1290,815 1370,785 1425,765 1475,780 1540,773 1590,775 1640,785 1670,775 1710,730 1770,635 1835,545 1880,475 1940,405 2000,350 2020,342 2060,360 2120,412 2180,470 2230,515 2300,582 2380,640 2440,690 2520,762 2600,840 2660,915 2740,975 2800,1025 2860,1100 2920,1165 2960,1215 3040,1255 3120,1308 3200,1322 3260,1318 3320,1315 3350,1290 3385,1247 3430,1210 3485,1160 3550,1133 3610,1133 3660,1132 3690,1142 3735,1195'
};

// recent volume, first entry belongs to bar 264
const volumes = [27, 30, 15, 5, 45, 15, 18, 13, 12, 15, 207, 78, 31, 32, 14, 22, 17, 16, 13, 34, 18, 10, 13, 16, 9, 9, 10, 9, 10, 12, 82, 51, 10, 22, 13, 15, 13, 13, 11, 9, 9, 10, 10, 3];
const volumeM5 = '2,2 548,2 560,4 586,4 600,3 990,3 1040,4 1056,4 1063,14 1069,15 1075,23 1081,20 1087,21 1093,18 1097,45 1102,67 1106,70 1112,75 1114,73 1118,38 1122,23 1130,17 1136,21 1143,18 1150,15 1158,11 1174,9 1180,32 1186,33 1193,37 1198,23 1205,17 1214,14 1230,9';
const volumeM10 = '2,2.5 551,2.5 575,3.5 591,2.5 1056,2.5 1063,8 1069,9 1079,17 1093,20 1099,40 1109,48 1114,44 1121,46 1133,47 1140,25 1147,20 1174,13 1183,22 1193,23 1214,25 1222,16 1230,13';

function add(parent, name, attrs) {
    const el = document.createElementNS(SVG, name);
    for (const key in attrs) {
        el.setAttribute(key, attrs[key]);
    }
    parent.appendChild(el);
}

function parse(text) {
    return text.split(' ').map(p => p.split(',').map(Number));
}

function curve(pts) {
    let d = 'M' + pts[0];
    for (let i = 1; i < pts.length - 1; i++) {
        const mx = (pts[i][0] + pts[i + 1][0]) / 2;
        const my = (pts[i][1] + pts[i + 1][1]) / 2;
        d += 'Q' + pts[i] + ' ' + mx + ',' + my;
    }
    return d + 'L' + pts[pts.length - 1];
}

function drawKline(svg) {
    [388, 755, 1122].forEach(y => {
        add(svg, 'line', { x1: 42, x2: 3738, y1: y, y2: y, class: 'grid-line', 'vector-effect': 'non-scaling-stroke' });
    });
    add(svg, 'line', { x1: 42, x2: 3738, y1: 1324, y2: 1324, class: 'now-line', 'vector-effect': 'non-scaling-stroke' });
    bars.forEach((bar, i) => {
        const dir = bar[0] === 'r' ? 'up' : 'down';
        const [top, bottom] = bar.slice(1).split('-').map(Number);
        const x = 48 + i * 12;
        add(svg, 'rect', { x: x - 6, y: top, width: 12, height: bottom - top, class: 'bar-' + dir });
        add(svg, 'rect', { x: x - 3, y: top, width: 6, height: bottom - top, class: 'core-' + dir });
    });
    for (const name in averages) {
        add(svg, 'path', { d: curve(parse(averages[name])), class: 'line line-' + name });
    }
}

function drawVolume(svg) {
    const scale = Number(svg.dataset.scale);
    const mid = svg.dataset.mid;
    add(svg, 'line', { x1: 0, x2: 1232, y1: mid, y2: mid, class: 'grid-line' });
    bars.forEach((bar, i) => {
        let h = 2;
        if (i === 248) h = 10;
        if (i >= 264) h = volumes[i - 264] * scale;
        const up = bar[0] === 'r';
        add(svg, 'rect', { x: i * 4 + (up ? 0 : .5), y: 279 - h, width: up ? 4 : 3, height: h, class: up ? 'bar-up' : 'core-down' });
    });
    [['v5', volumeM5], ['v10', volumeM10]].forEach(([name, text]) => {
        const pts = parse(text).map(p => [p[0], 279 - p[1] * scale]);
        add(svg, 'polyline', { points: pts.join(' '), class: 'line line-' + name });
    });
}

drawKline(document.getElementById('kline'));
document.querySelectorAll('.volume .plot').forEach(drawVolume);
```
